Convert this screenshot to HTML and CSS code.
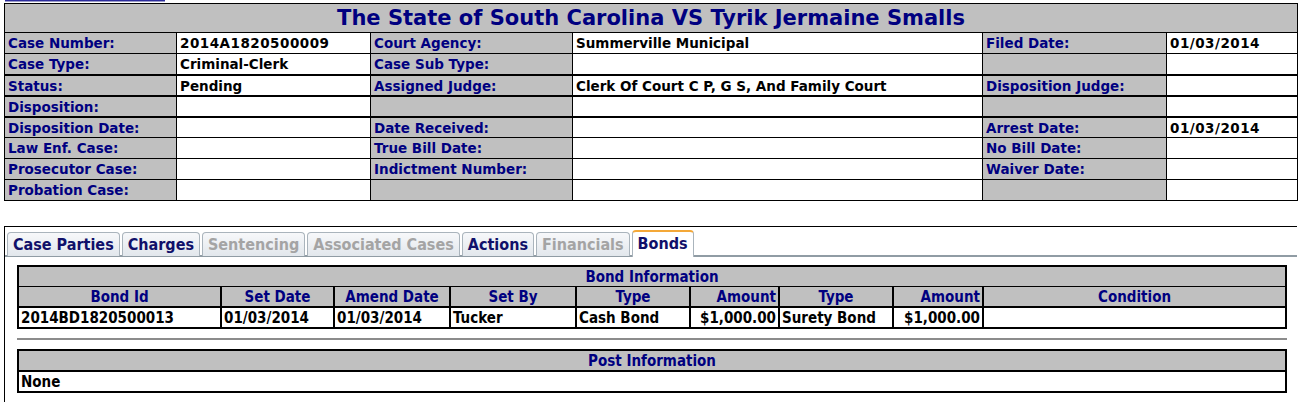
FILE: index.html
```html
<!DOCTYPE html>
<html lang="en">
<head>
    <meta charset="UTF-8">
    <title>Case Details</title>
    <link rel="stylesheet" href="styles.css">
</head>
<body>
    <div class="topbar"><span class="topbar-mark"></span></div>

    <table class="case-table">
        <colgroup>
            <col style="width:172px">
            <col style="width:194px">
            <col style="width:202px">
            <col style="width:410px">
            <col style="width:184px">
            <col style="width:131px">
        </colgroup>
        <tr>
            <th colspan="6" class="case-title">The State of South Carolina VS Tyrik Jermaine Smalls</th>
        </tr>
        <tr>
            <td class="lbl">Case Number:</td><td class="val num">2014A1820500009</td>
            <td class="lbl">Court Agency:</td><td class="val">Summerville Municipal</td>
            <td class="lbl">Filed Date:</td><td class="val num">01/03/2014</td>
        </tr>
        <tr>
            <td class="lbl">Case Type:</td><td class="val">Criminal-Clerk</td>
            <td class="lbl">Case Sub Type:</td><td class="val"></td>
            <td class="lbl"></td><td class="val"></td>
        </tr>
        <tr class="thick">
            <td class="lbl">Status:</td><td class="val">Pending</td>
            <td class="lbl">Assigned Judge:</td><td class="val">Clerk Of Court C P, G S, And Family Court</td>
            <td class="lbl">Disposition Judge:</td><td class="val"></td>
        </tr>
        <tr class="thick">
            <td class="lbl">Disposition:</td><td class="val"></td>
            <td class="lbl"></td><td class="val"></td>
            <td class="lbl"></td><td class="val"></td>
        </tr>
        <tr class="thick">
            <td class="lbl">Disposition Date:</td><td class="val"></td>
            <td class="lbl">Date Received:</td><td class="val"></td>
            <td class="lbl">Arrest Date:</td><td class="val num">01/03/2014</td>
        </tr>
        <tr>
            <td class="lbl">Law Enf. Case:</td><td class="val"></td>
            <td class="lbl">True Bill Date:</td><td class="val"></td>
            <td class="lbl">No Bill Date:</td><td class="val"></td>
        </tr>
        <tr>
            <td class="lbl">Prosecutor Case:</td><td class="val"></td>
            <td class="lbl">Indictment Number:</td><td class="val"></td>
            <td class="lbl">Waiver Date:</td><td class="val"></td>
        </tr>
        <tr>
            <td class="lbl">Probation Case:</td><td class="val"></td>
            <td class="lbl"></td><td class="val"></td>
            <td class="lbl"></td><td class="val"></td>
        </tr>
    </table>

    <div class="tab-panel">
        <ul class="tabs">
            <li class="tab">Case Parties</li>
            <li class="tab">Charges</li>
            <li class="tab disabled">Sentencing</li>
            <li class="tab disabled">Associated Cases</li>
            <li class="tab">Actions</li>
            <li class="tab disabled">Financials</li>
            <li class="tab active">Bonds</li>
        </ul>

        <div class="tab-body">
            <table class="grid bond-table">
                <colgroup>
                    <col style="width:203px">
                    <col style="width:113px">
                    <col style="width:116px">
                    <col style="width:126px">
                    <col style="width:114px">
                    <col style="width:89px">
                    <col style="width:114px">
                    <col style="width:90px">
                    <col>
                </colgroup>
                <tr><th colspan="9" class="grid-title">Bond Information</th></tr>
                <tr>
                    <th>Bond Id</th>
                    <th>Set Date</th>
                    <th>Amend Date</th>
                    <th>Set By</th>
                    <th>Type</th>
                    <th class="right">Amount</th>
                    <th>Type</th>
                    <th class="right">Amount</th>
                    <th>Condition</th>
                </tr>
                <tr>
                    <td>2014BD1820500013</td>
                    <td>01/03/2014</td>
                    <td>01/03/2014</td>
                    <td>Tucker</td>
                    <td>Cash Bond</td>
                    <td class="right">$1,000.00</td>
                    <td>Surety Bond</td>
                    <td class="right">$1,000.00</td>
                    <td></td>
                </tr>
            </table>

            <hr class="divider">

            <table class="grid post-table">
                <tr><th class="grid-title">Post Information</th></tr>
                <tr><td>None</td></tr>
            </table>
        </div>
    </div>
</body>
</html>
```

FILE: styles.css
```css
body {
    margin: 0;
    padding: 0 1px 0 4px;
    background: #fff;
    font-family: "DejaVu Sans", Verdana, sans-serif;
    color: #000;
}
.topbar {
    height: 3px;
}
.topbar-mark {
    display: block;
    width: 160px;
    height: 2px;
    margin-left: 1px;
    background: #2b2b9c;
    border-bottom: 1px solid #9a9ac8;
    box-sizing: border-box;
}
.case-table {
    width: 1294px;
    border-collapse: collapse;
    table-layout: fixed;
    border: 1px solid #000;
}
.case-table td,
.case-table th {
    border: 1px solid #000;
    height: 20px;
    padding: 0 3px;
    font-size: 13.5px;
    font-weight: bold;
    text-align: left;
    white-space: nowrap;
    overflow: hidden;
}
.case-table th.case-title {
    height: 28px;
    background: #c0c0c0;
    color: #000080;
    font-size: 21px;
    text-align: center;
}
.case-table tr.thick td {
    border-top-width: 2px;
    height: 19px;
}
.lbl {
    background: #c0c0c0;
    color: #000080;
}
.val {
    background: #fff;
    color: #000;
}
.val.num {
    letter-spacing: 0.5px;
}
.tab-panel {
    margin-top: 25px;
    border-top: 1px solid #000;
    border-left: 1px solid #000;
    padding-top: 3px;
    height: 180px;
}
.tabs {
    list-style: none;
    margin: 0;
    padding: 0 0 0 2px;
    display: flex;
    align-items: flex-end;
    gap: 2px;
    border-bottom: 2px solid #909ca4;
    font-family: "DejaVu Sans Condensed", Tahoma, sans-serif;
}
.tab {
    height: 23px;
    line-height: 23px;
    padding: 0 5px;
    margin-bottom: -1px;
    font-size: 16px;
    font-weight: bold;
    color: #10106a;
    background: linear-gradient(#f7f8fa, #e2e7ec);
    border: 1px solid #aab4bc;
    border-bottom: none;
    border-radius: 4px 4px 0 0;
}
.tab.disabled {
    color: #a4a4a4;
}
.tab.active {
    height: 25px;
    margin-bottom: -2px;
    background: #fff;
    border-top: 2px solid #f4a838;
    color: #10106a;
}
.tab-body {
    padding: 8px 10px 0 12px;
    font-family: "DejaVu Sans Condensed", Tahoma, sans-serif;
}
.grid {
    width: 100%;
    border-collapse: collapse;
    table-layout: fixed;
    border: 2px solid #000;
}
.grid th,
.grid td {
    border: 2px solid #000;
    height: 19px;
    padding: 0 2px;
    font-size: 15px;
    font-weight: bold;
    white-space: nowrap;
    overflow: hidden;
}
.grid th {
    background: #c0c0c0;
    color: #000080;
    text-align: center;
    border-top-width: 1px;
    border-bottom-width: 1px;
}
.grid th.grid-title {
    border-right-width: 1px;
}
.grid td {
    background: #fff;
    text-align: left;
}
.grid .right {
    text-align: right;
}
.divider {
    margin: 9px 0;
    border: 0;
    border-top: 2px solid #8c8c8c;
    height: 0;
}
.post-table td {
    text-align: left;
}
```
